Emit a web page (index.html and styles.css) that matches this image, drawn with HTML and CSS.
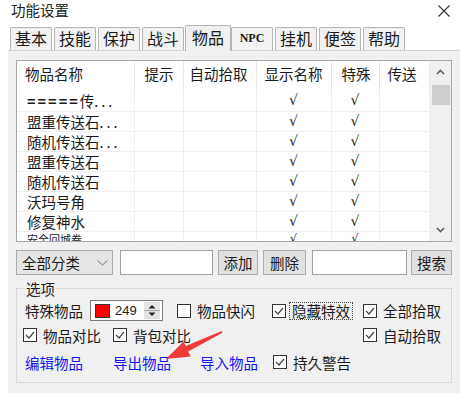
FILE: index.html
```html
<!DOCTYPE html>
<html lang="zh-CN">
<head>
    <meta charset="UTF-8">
    <title>功能设置</title>
    <link rel="stylesheet" href="styles.css">
</head>
<body>
    <div class="titlebar">
        <span class="title">功能设置</span>
        <svg class="close" viewBox="0 0 12 12"><path d="M0.5 0.5 L11.5 11.5 M11.5 0.5 L0.5 11.5" stroke="#333" stroke-width="1.1"/></svg>
    </div>

    <div class="tabs">
        <div class="tab">基本</div>
        <div class="tab">技能</div>
        <div class="tab">保护</div>
        <div class="tab">战斗</div>
        <div class="tab active">物品</div>
        <div class="tab npc">NPC</div>
        <div class="tab">挂机</div>
        <div class="tab">便签</div>
        <div class="tab">帮助</div>
    </div>

    <div class="page">
        <!-- item list -->
        <div class="list">
            <table class="grid">
                <colgroup>
                    <col class="c-name"><col class="c-tip"><col class="c-auto"><col class="c-show"><col class="c-spec"><col class="c-tele">
                </colgroup>
                <thead>
                    <tr><th>物品名称</th><th class="p10">提示</th><th class="p6">自动拾取</th><th>显示名称</th><th class="p10">特殊</th><th>传送</th></tr>
                </thead>
                <tbody>
                    <tr><td class="name"><span class="eq">=====</span>传<span class="dots">...</span></td><td></td><td></td><td class="ck">√</td><td class="ck">√</td><td></td></tr>
                    <tr><td class="name">盟重传送石<span class="dots">...</span></td><td></td><td></td><td class="ck">√</td><td class="ck">√</td><td></td></tr>
                    <tr><td class="name">随机传送石<span class="dots">...</span></td><td></td><td></td><td class="ck">√</td><td class="ck">√</td><td></td></tr>
                    <tr><td class="name">盟重传送石</td><td></td><td></td><td class="ck">√</td><td class="ck">√</td><td></td></tr>
                    <tr><td class="name">随机传送石</td><td></td><td></td><td class="ck">√</td><td class="ck">√</td><td></td></tr>
                    <tr><td class="name">沃玛号角</td><td></td><td></td><td class="ck">√</td><td class="ck">√</td><td></td></tr>
                    <tr><td class="name">修复神水</td><td></td><td></td><td class="ck">√</td><td class="ck">√</td><td></td></tr>
                    <tr class="cut"><td class="name">安全回城卷</td><td></td><td></td><td class="ck">√</td><td class="ck">√</td><td></td></tr>
                </tbody>
            </table>
            <div class="scrollbar">
                <div class="sb-btn"><svg viewBox="0 0 9 6"><path d="M1 5 L4.5 1.5 L8 5" fill="none" stroke="#606060" stroke-width="1.6"/></svg></div>
                <div class="sb-thumb"></div>
                <div class="sb-track"></div>
                <div class="sb-btn"><svg viewBox="0 0 9 6"><path d="M1 1 L4.5 4.5 L8 1" fill="none" stroke="#606060" stroke-width="1.6"/></svg></div>
            </div>
        </div>

        <!-- filter / search bar -->
        <div class="toolbar">
            <div class="select">
                <span>全部分类</span>
                <svg viewBox="0 0 11 6"><path d="M0.5 0.5 L5.5 5 L10.5 0.5" fill="none" stroke="#777" stroke-width="1"/></svg>
            </div>
            <div class="field f-add"></div>
            <div class="btn b-add">添加</div>
            <div class="btn b-del">删除</div>
            <div class="field f-search"></div>
            <div class="btn b-search">搜索</div>
        </div>

        <!-- options group -->
        <fieldset class="options">
            <legend>选项</legend>
            <div class="opt-row r1">
                <span class="lbl-special">特殊物品</span>
                <div class="colorbox">
                    <span class="swatch"></span>
                    <span class="num">249</span>
                    <svg class="spin" viewBox="0 0 16 17">
                        <rect x="0" y="0" width="16" height="17" fill="#e3e3e3"/>
                        <path d="M0 8.5 H16" stroke="#aaa" stroke-width="1"/>
                        <path d="M4.5 6.5 L8 3 L11.5 6.5 Z" fill="#222"/>
                        <path d="M4.5 10.5 L8 14 L11.5 10.5 Z" fill="#222"/>
                    </svg>
                </div>
                <div class="chk w-flash">
                    <svg viewBox="0 0 14 14"><rect x="0.5" y="0.5" width="13" height="13" fill="#fff" stroke="#333"/></svg>
                    <span>物品快闪</span>
                </div>
                <div class="chk w-hide">
                    <svg viewBox="0 0 14 14"><rect x="0.5" y="0.5" width="13" height="13" fill="#fff" stroke="#333"/><path d="M3 7 L6 10 L11 4" fill="none" stroke="#444" stroke-width="1.2"/></svg>
                    <span class="focus">隐藏特效</span>
                </div>
                <div class="chk">
                    <svg viewBox="0 0 14 14"><rect x="0.5" y="0.5" width="13" height="13" fill="#fff" stroke="#333"/><path d="M3 7 L6 10 L11 4" fill="none" stroke="#444" stroke-width="1.2"/></svg>
                    <span>全部拾取</span>
                </div>
            </div>
            <div class="opt-row r2">
                <div class="chk w-cmp">
                    <svg viewBox="0 0 14 14"><rect x="0.5" y="0.5" width="13" height="13" fill="#fff" stroke="#333"/><path d="M3 7 L6 10 L11 4" fill="none" stroke="#444" stroke-width="1.2"/></svg>
                    <span>物品对比</span>
                </div>
                <div class="chk w-bag">
                    <svg viewBox="0 0 14 14"><rect x="0.5" y="0.5" width="13" height="13" fill="#fff" stroke="#333"/><path d="M3 7 L6 10 L11 4" fill="none" stroke="#444" stroke-width="1.2"/></svg>
                    <span>背包对比</span>
                </div>
                <div class="chk">
                    <svg viewBox="0 0 14 14"><rect x="0.5" y="0.5" width="13" height="13" fill="#fff" stroke="#333"/><path d="M3 7 L6 10 L11 4" fill="none" stroke="#444" stroke-width="1.2"/></svg>
                    <span>自动拾取</span>
                </div>
            </div>
            <div class="opt-row r3">
                <a class="link w-edit">编辑物品</a>
                <a class="link w-export">导出物品</a>
                <a class="link w-import">导入物品</a>
                <div class="chk">
                    <svg viewBox="0 0 14 14"><rect x="0.5" y="0.5" width="13" height="13" fill="#fff" stroke="#333"/><path d="M3 7 L6 10 L11 4" fill="none" stroke="#444" stroke-width="1.2"/></svg>
                    <span>持久警告</span>
                </div>
            </div>
        </fieldset>
    </div>

    <!-- red annotation arrow -->
    <svg class="arrow" viewBox="0 0 460 393">
        <polygon points="166,359 183.5,341.4 185.8,346 221.6,331 222.4,332.8 188.2,351.4 190.6,356.4" fill="#f03a3a"/>
    </svg>
</body>
</html>
```

FILE: styles.css
```css
* {
    box-sizing: border-box;
}

body {
    margin: 0;
    width: 460px;
    height: 393px;
    overflow: hidden;
    position: relative;
    background: #fff;
    font-family: "Noto Sans CJK SC", "Microsoft YaHei", sans-serif;
    font-size: 14.5px;
    color: #1a1a1a;
}

.titlebar {
    height: 22px;
    display: flex;
    justify-content: space-between;
    align-items: flex-start;
    padding: 0 10px 0 11px;
}

.title {
    line-height: 19px;
    color: #222;
}

.close {
    width: 12px;
    height: 12px;
    margin-top: 5px;
}

/* tab strip */
.tabs {
    height: 29px;
    margin-left: 8px;
    padding-left: 2px;
    display: flex;
    align-items: flex-end;
    gap: 2px;
    border-bottom: 1px solid #d5d5d5;
}

.tab {
    width: 42px;
    height: 23px;
    border: 1px solid #b4b4b4;
    border-bottom: none;
    border-radius: 2px 2px 0 0;
    background: #f2f2f2;
    font-size: 16px;
    line-height: 21px;
    text-align: center;
    flex: none;
}

.tab.active {
    position: relative;
    z-index: 1;
    width: 46px;
    height: 26px;
    margin: 0 -2px -1px -1px;
    line-height: 23px;
    background: #f0f0f0;
}

.tab.npc {
    font-family: "Liberation Serif", serif;
    font-weight: bold;
    font-size: 12px;
}

/* page body */
.page {
    margin-left: 8px;
    height: 342px;
    padding: 9px 8px 0;
    background: #f0f0f0;
}

.list {
    display: flex;
    height: 182px;
    border: 1px solid #a8a8a8;
    background: #fff;
    overflow: hidden;
}

.grid {
    width: 412px;
    flex: none;
    table-layout: fixed;
    border-collapse: collapse;
    align-self: flex-start;
}

.c-name { width: 117px; }
.c-tip { width: 49px; }
.c-auto { width: 73px; }
.c-show { width: 75px; }
.c-spec { width: 48px; }
.c-tele { width: 50px; }

.grid th {
    height: 30px;
    padding: 4px 0 0 8px;
    vertical-align: top;
    text-align: left;
    font-weight: normal;
    line-height: 17px;
    border-right: 1px solid #e8e8e8;
    white-space: nowrap;
    overflow: hidden;
}

.grid th.p10 { padding-left: 10px; }
.grid th.p6 { padding-left: 6px; }

.grid td {
    height: 20px;
    padding: 0;
    line-height: 19px;
    border-right: 1px solid #f0f0f0;
    border-bottom: 1px solid #f0f0f0;
    white-space: nowrap;
    overflow: hidden;
}

.grid td.name {
    padding-left: 10px;
}

.grid tr.cut td {
    font-size: 11px;
    line-height: 14px;
    vertical-align: top;
}

.eq {
    font-weight: bold;
    letter-spacing: 2px;
}

.dots {
    letter-spacing: 3px;
}

.grid td.ck {
    text-align: center;
    font-family: "DejaVu Sans", sans-serif;
    font-size: 14px;
    color: #222;
}

.scrollbar {
    width: 22px;
    flex: none;
    display: flex;
    flex-direction: column;
    background: #f0f0f0;
}

.sb-btn {
    height: 22px;
    display: flex;
    align-items: center;
    justify-content: center;
}

.sb-btn svg {
    width: 9px;
    height: 6px;
}

.sb-thumb {
    height: 20px;
    margin: 2px 2px 0;
    background: #cdcdcd;
}

.sb-track {
    flex: 1;
}

/* filter bar */
.toolbar {
    display: flex;
    height: 25px;
    margin-top: 8px;
}

.select {
    width: 97px;
    display: flex;
    align-items: center;
    justify-content: space-between;
    padding: 0 4px 0 5px;
    border: 1px solid #acacac;
    background: #e5e5e5;
}

.select svg {
    width: 11px;
    height: 6px;
}

.field {
    background: #fff;
    border: 1px solid #a0a0a0;
}

.f-add { width: 93px; margin-left: 7px; }
.f-search { width: 95px; margin-left: 6px; }

.btn {
    display: flex;
    align-items: center;
    justify-content: center;
    border: 1px solid #adadad;
    background: #e1e1e1;
}

.b-add { width: 40px; margin-left: 5px; }
.b-del { width: 43px; margin-left: 5px; }
.b-search { width: 41px; margin-left: 4px; }

/* options group box */
.options {
    margin: 5px 0 0;
    padding: 0 0 10px 8px;
    border: 1px solid #d8d8d8;
    min-width: 0;
}

.options legend {
    padding: 0 1px;
    line-height: 17px;
}

.opt-row {
    display: flex;
    align-items: center;
    height: 20px;
    white-space: nowrap;
}

.r1 { margin-top: 3px; height: 21px; }
.r2 { margin-top: 4px; }
.r3 { margin-top: 7px; }

.lbl-special {
    width: 65px;
    flex: none;
}

.colorbox {
    width: 73px;
    height: 21px;
    flex: none;
    display: flex;
    align-items: center;
    border: 1px solid #7a7a7a;
    background: #fff;
}

.swatch {
    width: 15px;
    height: 14px;
    margin-left: 4px;
    background: #ff0000;
    border: 1px solid #333;
}

.num {
    margin-left: 5px;
    font-family: "Liberation Sans", Arial, sans-serif;
    font-size: 13px;
}

.spin {
    width: 16px;
    height: 17px;
    margin-left: auto;
    margin-right: 2px;
}

.chk {
    display: flex;
    align-items: center;
    flex: none;
}

.chk svg {
    width: 14px;
    height: 14px;
    margin-right: 6px;
    flex: none;
}

.focus {
    border: 1px dotted #444;
    padding: 0 2px;
    margin-left: -3px;
    line-height: 16px;
}

.w-flash { width: 95px; margin-left: 14px; }
.w-hide { width: 91px; }
.w-cmp { width: 90px; margin-left: -2px; }
.w-bag { width: 250px; }

.link {
    color: #1414f0;
    flex: none;
}

.w-edit { width: 88px; }
.w-export { width: 87px; }
.w-import { width: 73px; }

.arrow {
    position: absolute;
    left: 0;
    top: 0;
    width: 460px;
    height: 393px;
    pointer-events: none;
}
```
